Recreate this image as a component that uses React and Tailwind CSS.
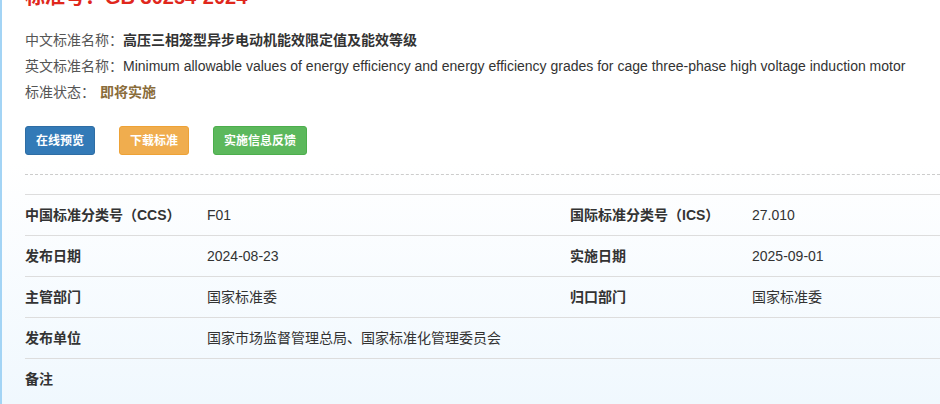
import React from 'react';

const font = { fontFamily: '"Liberation Sans", Arial, "Noto Sans CJK SC", sans-serif' };

const rows = [
  [['中国标准分类号（CCS）', 'F01'], ['国际标准分类号（ICS）', '27.010']],
  [['发布日期', '2024-08-23'], ['实施日期', '2025-09-01']],
  [['主管部门', '国家标准委'], ['归口部门', '国家标准委']],
  [['发布单位', '国家市场监督管理总局、国家标准化管理委员会']],
  [['备注', '']],
];

const Cell = ({ label, value }) => (
  <>
    <div className="font-bold text-[#333]">{label}</div>
    <div className="text-[#333]">{value}</div>
  </>
);

export default function App() {
  return (
    <div
      className="w-[940px] h-[404px] overflow-hidden border-l-2 border-[#a3d4f5] bg-gradient-to-b from-white via-white via-40% to-[#f0f8fe] text-[14px]"
      style={font}
    >
      <div className="pl-[23px]">
        {/* title, scrolled partly out of view */}
        <h1 className="-mt-[18px] h-[30px] leading-[30px] text-[20px] font-bold text-[#e0271c]">
          标准号：GB 30254-2024
        </h1>

        <div className="mt-[15px] leading-[26px]">
          <p className="text-[#555]">
            中文标准名称：<span className="font-bold text-[#333]">高压三相笼型异步电动机能效限定值及能效等级</span>
          </p>
          <p className="text-[#555] whitespace-nowrap">
            英文标准名称：<span className="text-[#333]">Minimum allowable values of energy efficiency and energy efficiency grades for cage three-phase high voltage induction motor</span>
          </p>
          <p className="text-[#555]">
            标准状态：<span className="ml-[5px] font-bold text-[#8a6d3b]">即将实施</span>
          </p>
        </div>

        <div className="mt-[21px] flex gap-[24px] text-[12px] font-bold text-white">
          <button className="h-[29px] px-[10px] rounded-[3px] border border-[#2e6da4] bg-[#337ab7]">在线预览</button>
          <button className="h-[29px] px-[10px] rounded-[3px] border border-[#eea236] bg-[#f0ad4e]">下载标准</button>
          <button className="h-[29px] px-[10px] rounded-[3px] border border-[#4cae4c] bg-[#5cb85c]">实施信息反馈</button>
        </div>

        <div className="mt-[19px] border-t border-dashed border-[#ccc]" />

        <div className="mt-[19px] border-t border-[#ddd]">
          {rows.map((row, i) => (
            <div
              key={i}
              className={`grid grid-cols-[182px_363px_182px_1fr] items-center h-[41px] ${i < rows.length - 1 ? 'border-b border-[#ddd]' : ''}`}
            >
              {row.map(([label, value]) => (
                <Cell key={label} label={label} value={value} />
              ))}
            </div>
          ))}
        </div>
      </div>
    </div>
  );
}
